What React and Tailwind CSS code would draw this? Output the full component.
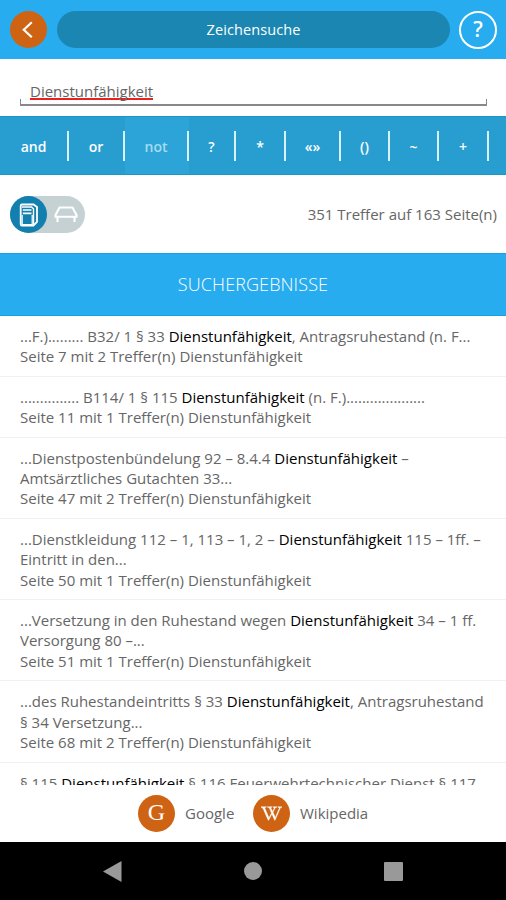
import React from "react";
import { FaWikipediaW } from "react-icons/fa";

const operators = [
  { label: "and", width: "w-[69px]" },
  { label: "or", width: "w-[56px]" },
  { label: "not", width: "w-[64px]", active: true },
  { label: "?", width: "w-[47px]" },
  { label: "*", width: "w-[50px]" },
  { label: "«»", width: "w-[55px]" },
  { label: "()", width: "w-[49px]" },
  { label: "~", width: "w-[49px]" },
  { label: "+", width: "w-[50px]" },
];

const TERM = "Dienstunfähigkeit";

const results = [
  { before: "...F.)......... B32/ 1 § 33 ", after: ", Antragsruhestand (n. F...", info: "Seite 7 mit 2 Treffer(n) " },
  { before: "............... B114/ 1 § 115 ", after: " (n. F.)....................", info: "Seite 11 mit 1 Treffer(n) " },
  { before: "...Dienstpostenbündelung 92 – 8.4.4 ", after: " –", rest: "Amtsärztliches Gutachten 33...", info: "Seite 47 mit 2 Treffer(n) " },
  { before: "...Dienstkleidung 112 – 1, 113 – 1, 2 – ", after: " 115 – 1ff. –", rest: "Eintritt in den...", info: "Seite 50 mit 1 Treffer(n) " },
  { before: "...Versetzung in den Ruhestand wegen ", after: " 34 – 1 ff.", rest: "Versorgung 80 –...", info: "Seite 51 mit 1 Treffer(n) " },
  { before: "...des Ruhestandeintritts § 33 ", after: ", Antragsruhestand", rest: "§ 34 Versetzung...", info: "Seite 68 mit 2 Treffer(n) " },
  { before: "§ 115 ", after: " § 116 Feuerwehrtechnischer Dienst § 117" },
];

function Header() {
  return (
    <header className="flex h-[59px] shrink-0 items-center bg-[#27acef] pl-[10px]">
      <button className="flex size-[37px] items-center justify-center rounded-full bg-[#cf6314]">
        <svg width="37" height="37" viewBox="0 0 37 37" fill="none" stroke="#fff" strokeWidth="2.2">
          <path d="M21.8 11.3 13.8 18.8l8 7.4" />
        </svg>
      </button>
      <h1 className="ml-[10px] flex h-[37px] w-[393px] items-center justify-center rounded-full bg-[#1c86b3] text-[14.5px] font-medium tracking-[0.1px] text-white">
        Zeichensuche
      </h1>
      <button className="ml-[9px] flex size-[38px] items-center justify-center rounded-full border-2 border-white text-[21px] font-semibold text-white">
        ?
      </button>
    </header>
  );
}

function ViewToggle() {
  return (
    <div className="flex h-[37px] w-[75px] rounded-full bg-[#c5d1d2]">
      <div className="size-[37px] rounded-full bg-[#127fae]">
        <svg width="37" height="37" viewBox="0 0 37 37" fill="none" stroke="#fff">
          <path d="M12 8.5h11.5l3.5 2.5v15l-3.5 3.5H12q-1.3 0-1.3-1.3V9.8q0-1.3 1.3-1.3Z" strokeWidth="1.8" />
          <path d="M12 11h9.5l2 1.8v16" strokeWidth="1.4" />
          <path d="M12.8 14h8.7M12.8 17.3h8.7" strokeWidth="1.7" />
          <path d="M12.2 19v9.5h10V19" strokeWidth="1.2" />
        </svg>
      </div>
      <svg width="38" height="37" viewBox="0 0 38 37" fill="none" stroke="#fff" strokeWidth="2.1">
        <path d="M12.5 11.5h13l4 7.5v1.8h-21V19l4-7.5ZM10.5 20.5v5.5M27.5 20.5v5.5" />
      </svg>
    </div>
  );
}

export default function App() {
  return (
    <div className="flex h-[900px] w-[506px] flex-col overflow-hidden bg-white font-['Open_Sans','Noto_Sans',sans-serif] text-[#666]">
      <Header />

      <div className="flex h-[57px] shrink-0 flex-col px-5 pt-[22px]">
        <div className="h-[20px] pl-[10px] text-[15px] leading-[20px]">
          <span className="inline-block h-[19px] border-b-2 border-[#e8211f]">{TERM}</span>
        </div>
        <div className="-mt-[2px] h-[7px] w-[467px] border-x border-b-2 border-[#888]" />
      </div>

      <nav className="flex h-[59px] shrink-0 border-y border-[#1c96c9] bg-[#289dcf] text-[14px] font-semibold text-white">
        {operators.map((op) => (
          <div
            key={op.label}
            className={`flex shrink-0 items-center ${op.width} ${op.active ? "bg-[#2ca4d8] text-[#a5dcf3]" : ""}`}
          >
            <span className="flex-1 pt-[2px] text-center">{op.label}</span>
            <span className="h-[30px] w-[2px] bg-[#d8f1fb]" />
          </div>
        ))}
      </nav>

      <div className="flex h-[78px] shrink-0 items-center justify-between pr-[9px] pl-[10px]">
        <ViewToggle />
        <p className="text-[15px]">351 Treffer auf 163 Seite(n)</p>
      </div>

      <h2 className="flex h-[63px] shrink-0 items-center justify-center border-y border-[#189fe6] bg-[#27acef] text-[18px] font-light tracking-[0.1px] text-white">
        SUCHERGEBNISSE
      </h2>

      <main className="h-[469px] shrink-0 overflow-hidden text-[15px] leading-[20.3px] whitespace-nowrap">
        {results.map((r) => (
          <article key={r.before} className="border-b-[1.5px] border-[#f0f0f0] pt-[10px] pb-[9.3px] pl-5">
            <p>
              {r.before}
              <b className="font-normal text-black">{TERM}</b>
              {r.after}
            </p>
            {r.rest && <p>{r.rest}</p>}
            {r.info && (
              <p>
                {r.info}
                {TERM}
              </p>
            )}
          </article>
        ))}
      </main>

      <div className="flex h-[57px] shrink-0 items-center pl-[138px] text-[15px]">
        <span className="flex size-[37px] items-center justify-center rounded-full bg-[#cf6314] font-['Liberation_Serif',serif] text-[24px] leading-none font-normal text-white">
          <span className="-mt-[3px]">G</span>
        </span>
        <span className="ml-[10px] w-[58px]">Google</span>
        <span className="ml-[10px] flex size-[37px] items-center justify-center rounded-full bg-[#cf6314] text-white">
          <FaWikipediaW size={21} stroke="#fff" strokeWidth={12} />
        </span>
        <span className="ml-[10px]">Wikipedia</span>
      </div>

      <footer className="flex h-[58px] shrink-0 items-center justify-between bg-black pr-[103px] pl-[103px]">
        <svg width="19" height="21" viewBox="0 0 19 21" fill="#999">
          <path d="M0 10.5 18.5 0v21Z" />
        </svg>
        <span className="size-[18px] rounded-full bg-[#999]" />
        <span className="size-[19px] rounded-[1px] bg-[#999]" />
      </footer>
    </div>
  );
}
